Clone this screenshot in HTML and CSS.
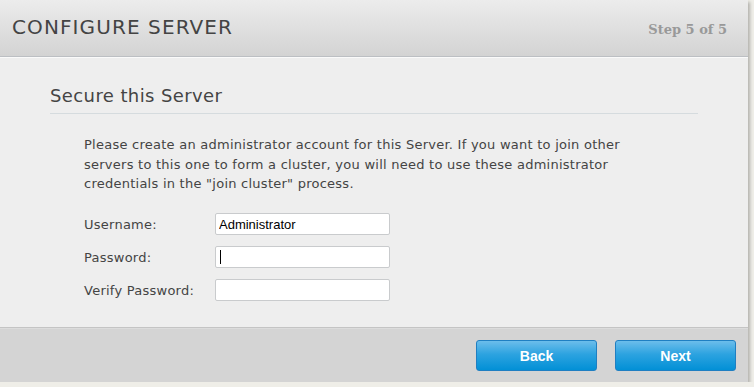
FILE: index.html
```html
<!DOCTYPE html>
<html lang="en">
<head>
    <meta charset="UTF-8">
    <title>Configure Server</title>
    <link rel="stylesheet" href="styles.css">
</head>
<body>
    <div class="dialog">
        <div class="dialog-header">
            <h1>CONFIGURE SERVER</h1>
            <span class="step">Step 5 of 5</span>
        </div>

        <div class="dialog-body">
            <h2>Secure this Server</h2>
            <div class="content">
                <p>Please create an administrator account for this Server. If you want to join other servers to this one to form a cluster, you will need to use these administrator credentials in the "join cluster" process.</p>

                <div class="form-row">
                    <label for="username">Username:</label>
                    <input type="text" id="username" value="Administrator">
                </div>
                <div class="form-row">
                    <label for="password">Password:</label>
                    <input type="password" id="password" class="focused">
                </div>
                <div class="form-row">
                    <label for="verify">Verify Password:</label>
                    <input type="password" id="verify">
                </div>
            </div>
        </div>

        <div class="dialog-footer">
            <button class="button">Back</button>
            <button class="button">Next</button>
        </div>
    </div>
</body>
</html>
```

FILE: styles.css
```css
body {
    margin: 0;
    background-color: #efeee8;
    font-family: "DejaVu Sans", Verdana, sans-serif;
    color: #444;
}

.dialog {
    width: 748px;
    height: 382px;
    display: flex;
    flex-direction: column;
    background-color: #eeeeee;
    box-shadow: 2px 2px 3px rgba(0, 0, 0, 0.25);
}

.dialog-header {
    height: 56px;
    display: flex;
    align-items: center;
    justify-content: space-between;
    padding: 0 21px 0 12px;
    background: linear-gradient(#ececec, #d3d3d3);
    border-bottom: 1px solid #bcbfc3;
    box-shadow: 0 1px 0 #fafafa;
}

.dialog-header h1 {
    margin: 0 0 2px 0;
    font-size: 20px;
    font-weight: normal;
    letter-spacing: 1.1px;
    color: #444;
}

.step {
    font-family: "DejaVu Serif", Georgia, serif;
    font-size: 13px;
    font-weight: bold;
    color: #999;
    margin-top: 2px;
}

.dialog-body {
    flex: 1;
    padding: 28px 50px 0 50px;
}

.dialog-body h2 {
    margin: 0;
    padding-bottom: 7px;
    font-size: 18px;
    font-weight: normal;
    letter-spacing: 0.4px;
    color: #444;
    border-bottom: 1px solid #d5dbde;
}

.content {
    padding: 0 0 0 34px;
    font-size: 13px;
    letter-spacing: 0.25px;
}

.content p {
    margin: 21px 0 14px 0;
    line-height: 19.5px;
    width: 560px;
}

.form-row {
    display: flex;
    align-items: center;
    height: 33px;
}

.form-row label {
    width: 131px;
}

.form-row input {
    width: 175px;
    height: 22px;
    box-sizing: border-box;
    border: 1px solid #c9cbcd;
    border-radius: 2px;
    padding: 0 3px;
    background-color: #fff;
    font-family: "Liberation Sans", Arial, sans-serif;
    font-size: 13px;
    letter-spacing: 0;
    color: #000;
}

.form-row input.focused {
    background: linear-gradient(to right, #fff 4px, #000 4px, #000 5px, #fff 5px) no-repeat 0 3px / 100% 14px, #fff;
}

.dialog-footer {
    height: 54px;
    display: flex;
    align-items: center;
    justify-content: flex-end;
    gap: 18px;
    padding: 0 12px;
    background-color: #d4d4d4;
    border-top: 1px solid #c4c4c4;
    box-shadow: inset 0 1px 0 #dcdcdc;
}

.button {
    width: 121px;
    height: 31px;
    margin-top: 1px;
    border: 1px solid #1f7fc2;
    border-radius: 3px;
    background: linear-gradient(#6cbdeb, #2da3e0 45%, #0290d6);
    color: #fff;
    font-family: "Liberation Sans", Arial, sans-serif;
    font-size: 14px;
    font-weight: bold;
    cursor: pointer;
}
```
